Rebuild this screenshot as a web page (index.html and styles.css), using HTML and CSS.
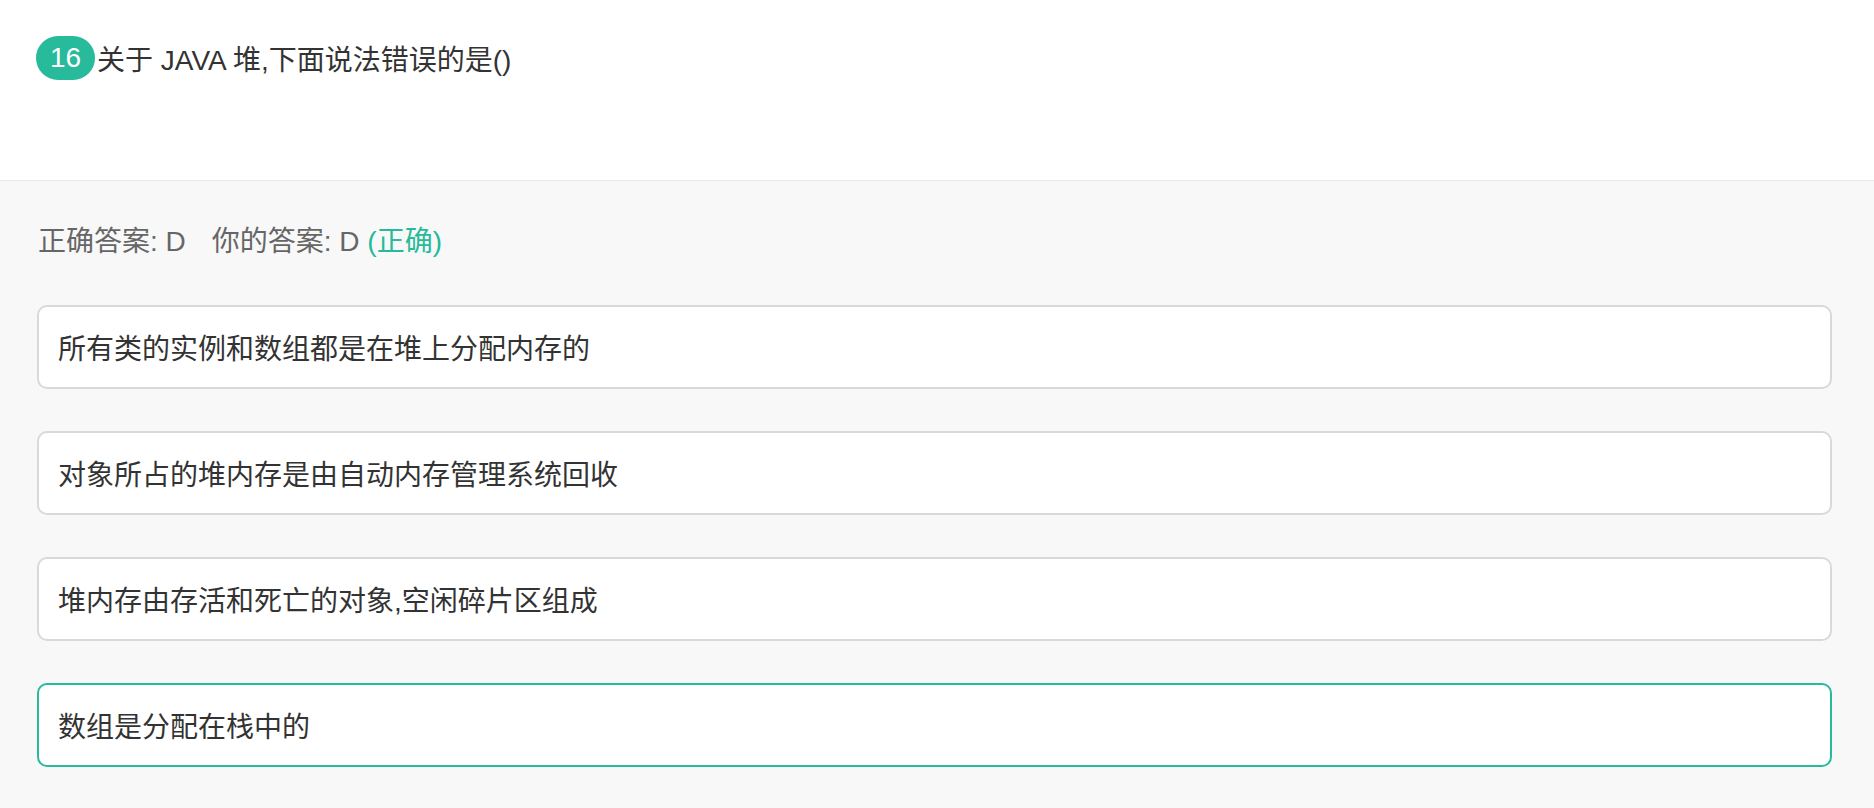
FILE: index.html
```html
<!DOCTYPE html>
<html lang="zh">
<head>
<meta charset="utf-8">
<title>Question 16</title>
<link rel="stylesheet" href="styles.css">
</head>
<body>
<header class="header">
  <div class="q-row">
    <span class="badge">16</span>
    <span class="q-text">关于 JAVA 堆,下面说法错误的是()</span>
  </div>
</header>
<main class="content">
  <div class="answer-line">
    <span>正确答案: D</span><span class="your">你的答案: D <span class="ok">(正确)</span></span>
  </div>
  <div class="options">
    <div class="option">所有类的实例和数组都是在堆上分配内存的</div>
    <div class="option">对象所占的堆内存是由自动内存管理系统回收</div>
    <div class="option">堆内存由存活和死亡的对象,空闲碎片区组成</div>
    <div class="option selected">数组是分配在栈中的</div>
  </div>
</main>
</body>
</html>
```

FILE: styles.css
```css
html, body {
  margin: 0;
  padding: 0;
}
body {
  background: #f8f8f8;
  font-family: "Liberation Sans", "Noto Sans CJK SC", sans-serif;
  min-height: 808px;
}
.header {
  background: #fff;
  height: 181px;
  box-sizing: border-box;
  padding: 36px 36px 0;
  border-bottom: 1px solid #e8e8e8;
}
.q-row {
  display: flex;
  align-items: center;
  height: 44px;
}
.badge {
  width: 59px;
  height: 44px;
  border-radius: 22px;
  background: #27ba9b;
  color: #fff;
  font-size: 28px;
  display: flex;
  align-items: center;
  justify-content: center;
}
.q-text {
  margin-left: 2px;
  font-size: 28px;
  color: #333;
}
.content {
  padding: 47px 42px 40px 37px;
}
.answer-line {
  font-size: 28px;
  line-height: 28px;
  color: #666;
  padding-left: 1px;
}
.your {
  margin-left: 26px;
}
.ok {
  color: #27ba9b;
}
.options {
  margin-top: 49px;
  display: flex;
  flex-direction: column;
  gap: 42px;
}
.option {
  height: 84px;
  box-sizing: border-box;
  border: 2px solid #d9d9d9;
  border-radius: 10px;
  background: #fff;
  padding: 0 19px;
  display: flex;
  align-items: center;
  font-size: 28px;
  color: #333;
}
.option.selected {
  border-color: #27ba9b;
}
```
